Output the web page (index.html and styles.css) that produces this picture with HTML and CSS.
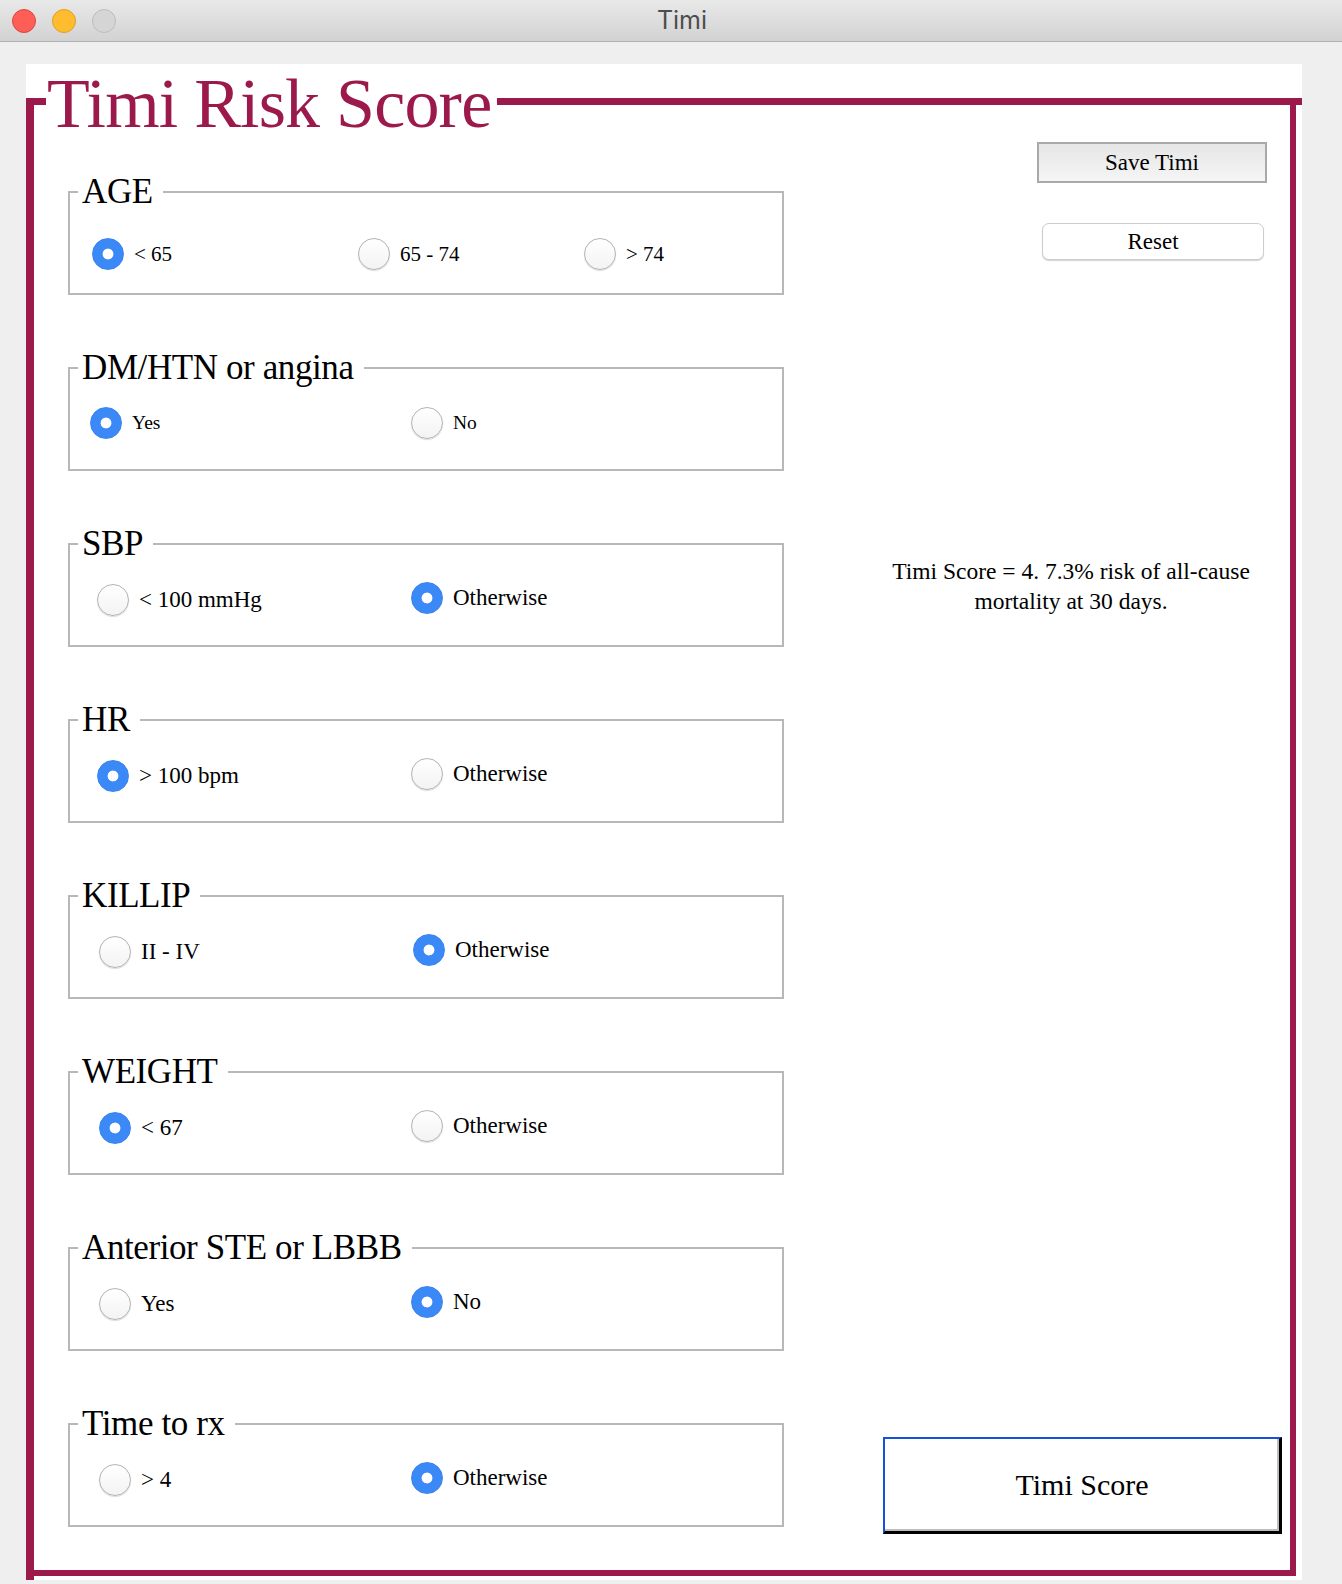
FILE: index.html
```html
<!DOCTYPE html>
<html lang="en">
<head>
<meta charset="utf-8">
<title>Timi</title>
<link rel="stylesheet" href="styles.css">
</head>
<body>
<div class="window">
  <header class="titlebar">
    <div class="lights">
      <span class="light red"></span>
      <span class="light yellow"></span>
      <span class="light gray"></span>
    </div>
    <div class="wtitle">Timi</div>
    <div></div>
  </header>

  <main class="sheet">
    <fieldset class="frame">
      <legend class="frame-title">Timi Risk Score</legend>
      <div class="body">
        <div class="groups">
          <fieldset class="grp">
            <legend>AGE</legend>
            <div class="row row-age">
              <label class="opt age1"><input type="radio" name="age" checked><span>&lt; 65</span></label>
              <label class="opt age2"><input type="radio" name="age"><span>65 - 74</span></label>
              <label class="opt"><input type="radio" name="age"><span>&gt; 74</span></label>
            </div>
          </fieldset>

          <fieldset class="grp">
            <legend>DM/HTN or angina</legend>
            <div class="row row-dm">
              <label class="opt dm1"><input type="radio" name="dm" checked><span>Yes</span></label>
              <label class="opt"><input type="radio" name="dm"><span>No</span></label>
            </div>
          </fieldset>

          <fieldset class="grp">
            <legend>SBP</legend>
            <div class="row row-a">
              <label class="opt a1"><input type="radio" name="sbp"><span>&lt; 100 mmHg</span></label>
              <label class="opt up"><input type="radio" name="sbp" checked><span>Otherwise</span></label>
            </div>
          </fieldset>

          <fieldset class="grp">
            <legend>HR</legend>
            <div class="row row-a">
              <label class="opt a1"><input type="radio" name="hr" checked><span>&gt; 100 bpm</span></label>
              <label class="opt up"><input type="radio" name="hr"><span>Otherwise</span></label>
            </div>
          </fieldset>

          <fieldset class="grp">
            <legend>KILLIP</legend>
            <div class="row row-b">
              <label class="opt b1"><input type="radio" name="killip"><span>II - IV</span></label>
              <label class="opt up"><input type="radio" name="killip" checked><span>Otherwise</span></label>
            </div>
          </fieldset>

          <fieldset class="grp">
            <legend>WEIGHT</legend>
            <div class="row row-b">
              <label class="opt c1"><input type="radio" name="weight" checked><span>&lt; 67</span></label>
              <label class="opt up"><input type="radio" name="weight"><span>Otherwise</span></label>
            </div>
          </fieldset>

          <fieldset class="grp">
            <legend>Anterior STE or LBBB</legend>
            <div class="row row-b">
              <label class="opt c1"><input type="radio" name="ste"><span>Yes</span></label>
              <label class="opt up"><input type="radio" name="ste" checked><span>No</span></label>
            </div>
          </fieldset>

          <fieldset class="grp">
            <legend>Time to rx</legend>
            <div class="row row-b">
              <label class="opt c1"><input type="radio" name="rx"><span>&gt; 4</span></label>
              <label class="opt up"><input type="radio" name="rx" checked><span>Otherwise</span></label>
            </div>
          </fieldset>
        </div>

        <aside class="side">
          <button class="btn btn-save" type="button">Save Timi</button>
          <button class="btn btn-reset" type="button">Reset</button>
          <p class="result">Timi Score = 4. 7.3% risk of all-cause mortality at 30 days.</p>
          <button class="btn btn-score" type="button">Timi Score</button>
        </aside>
      </div>
    </fieldset>
  </main>
</div>
</body>
</html>
```

FILE: styles.css
```css
* { box-sizing: border-box; }

html, body {
  margin: 0;
  padding: 0;
  background: #efefef;
}

.window {
  width: 1342px;
  height: 1584px;
  background: #efefef;
  overflow: hidden;
  font-family: "Liberation Serif", "Times New Roman", serif;
  color: #000;
}

/* ---------- title bar ---------- */
.titlebar {
  height: 42px;
  display: grid;
  grid-template-columns: 1fr auto 1fr;
  align-items: center;
  background: linear-gradient(#e9e9e9, #d2d2d2);
  border-bottom: 1px solid #b1b1b1;
}

.lights {
  display: flex;
  gap: 16px;
  padding-left: 12px;
  align-items: center;
}

.light {
  width: 24px;
  height: 24px;
  border-radius: 50%;
  border: 1px solid transparent;
}
.light.red { background: #fd5f57; border-color: #e0443e; }
.light.yellow { background: #febc2e; border-color: #dea123; }
.light.gray { background: #d5d5d5; border-color: #bdbdbd; }

.wtitle {
  font-family: Inter, "Liberation Sans", sans-serif;
  font-size: 25px;
  color: #4d4d4d;
  padding-left: 22px;
  padding-bottom: 1px;
}

/* ---------- white sheet ---------- */
.sheet {
  position: relative;
  margin: 22px 0 0 26px;
  width: 1276px;
  height: 1516px;
  background: #fff;
}

.sheet::after {
  content: "";
  position: absolute;
  top: 34px;
  right: 0;
  width: 6px;
  height: 7px;
  background: #9b1a4b;
}

.sheet::before {
  content: "";
  position: absolute;
  left: 0;
  bottom: 0;
  width: 8px;
  height: 4px;
  background: #9b1a4b;
}

.frame {
  margin: 0;
  padding: 0;
  min-width: 0;
  width: 1270px;
  border-style: solid;
  border-color: #9b1a4b;
  border-width: 7px 6px 6px 8px;
}

.frame-title {
  margin-left: 12px;
  padding: 5px 6px 0 1px;
  font-size: 70px;
  line-height: 70px;
  letter-spacing: -0.8px;
  color: #9b1a4b;
}

.body {
  display: flex;
  height: 1431px;
}

/* ---------- groups ---------- */
.groups {
  width: 750px;
  padding: 33px 0 0 34px;
  display: flex;
  flex-direction: column;
  gap: 53px;
}

.grp {
  margin: 0;
  padding: 0;
  min-width: 0;
  width: 716px;
  border: 2px solid #b8b8b8;
}

.grp legend {
  margin-left: 8px;
  padding: 0 10px 0 4px;
  font-size: 35px;
  line-height: 40px;
  letter-spacing: -0.4px;
}

.row {
  display: flex;
  align-items: flex-start;
  height: 81px;
  padding-top: 19px;
  font-size: 23px;
}

.row-age { padding-top: 26px; padding-left: 22px; font-size: 21px; }
.row-dm  { padding-left: 20px; font-size: 19.5px; }
.row-a   { padding-left: 27px; padding-top: 20px; }
.row-b   { padding-left: 29px; padding-top: 20px; }

.opt {
  display: flex;
  align-items: center;
  gap: 10px;
}
.opt.up { margin-top: -2px; }

.age1 { width: 266px; }
.age2 { width: 226px; }
.dm1  { width: 321px; }
.a1   { width: 314px; }
.b1   { width: 314px; }
.c1   { width: 312px; }

.opt input[type="radio"] {
  appearance: none;
  -webkit-appearance: none;
  flex: none;
  width: 32px;
  height: 32px;
  margin: 0;
  border-radius: 50%;
  border: 1px solid #b3b3b3;
  background: linear-gradient(#ffffff, #f3f3f3);
  box-shadow: 0 1px 1px rgba(0, 0, 0, 0.14);
}

.opt input[type="radio"]:checked {
  border-color: #3a84f2;
  background: radial-gradient(circle, #ffffff 0 5px, #3b88f7 5.8px);
  box-shadow: none;
}

/* ---------- side column ---------- */
.side {
  flex: 1;
  display: flex;
  flex-direction: column;
  align-items: flex-start;
  padding: 3px 0 36px 0;
}

.btn {
  font-family: "Liberation Serif", "Times New Roman", serif;
  color: #000;
  padding: 0;
  margin: 0;
  cursor: default;
}

.btn-save {
  margin-left: 253px;
  width: 230px;
  height: 41px;
  font-size: 23px;
  background: linear-gradient(#e6e6e6, #f5f5f5);
  border: 2px solid #a9a9a9;
}

.btn-reset {
  margin-left: 258px;
  margin-top: 40px;
  width: 222px;
  height: 37px;
  font-size: 23px;
  background: #fff;
  border: 1px solid #cdcdcd;
  border-radius: 7px;
  box-shadow: 0 1px 1px rgba(0, 0, 0, 0.18);
}

.result {
  margin: 296px 0 0 87px;
  width: 400px;
  text-align: center;
  font-size: 23.5px;
  line-height: 30px;
}

.btn-score {
  margin-top: auto;
  margin-left: 99px;
  width: 399px;
  height: 97px;
  font-size: 30px;
  background: #fff;
  border-style: solid;
  border-width: 2px 3px 3px 2px;
  border-color: #1652d9 #000 #000 #1652d9;
  box-shadow: inset -2px -2px 0 #bdbdbd;
}
```
